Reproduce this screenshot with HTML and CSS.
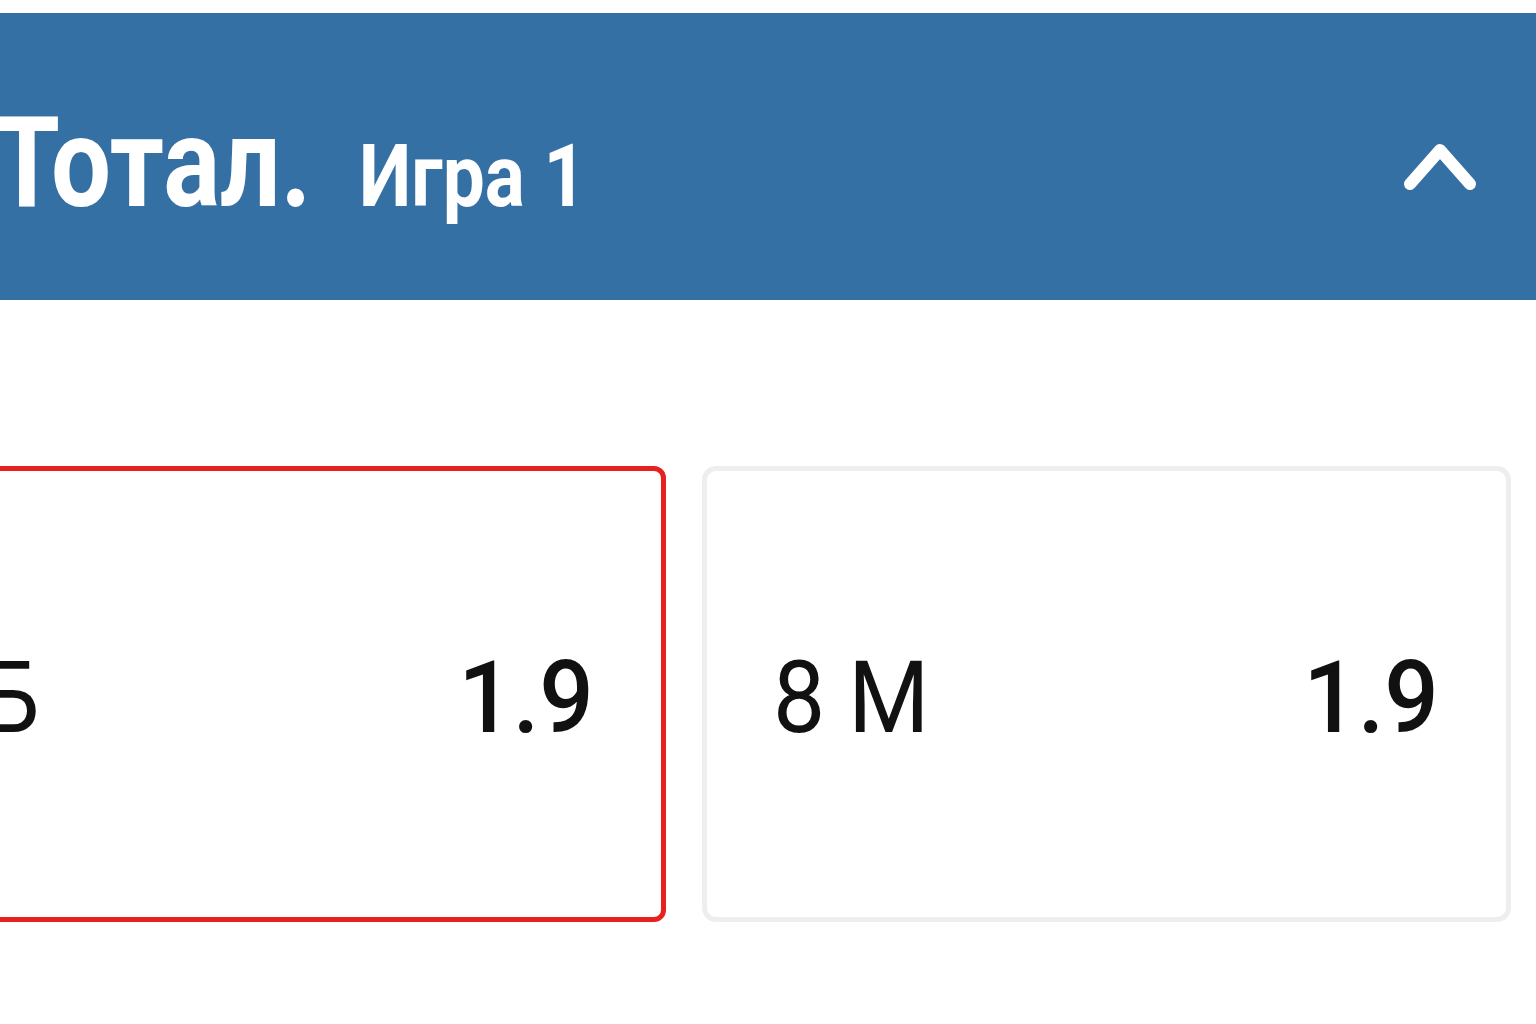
FILE: index.html
```html
<!DOCTYPE html>
<html lang="ru">
<head>
    <meta charset="UTF-8">
    <meta name="viewport" content="width=device-width, initial-scale=1.0">
    <title>Тотал. Игра 1</title>
    <link rel="stylesheet" href="styles.css">
</head>
<body>
    <div class="market">
        <div class="market-head">
            <div class="market-title">
                <span class="title-main">Тотал.</span>
                <span class="title-sub">Игра 1</span>
            </div>
            <svg class="toggle" width="76" height="56" viewBox="0 0 76 56">
                <path d="M8 47 L38 13 L68 47" fill="none" stroke="#fff" stroke-width="12" stroke-linecap="round" stroke-linejoin="round"/>
            </svg>
        </div>
        <div class="odds">
            <div class="odd selected">
                <span class="odd-label">8 Б</span>
                <span class="odd-value">1.9</span>
            </div>
            <div class="odd">
                <span class="odd-label">8 М</span>
                <span class="odd-value">1.9</span>
            </div>
        </div>
    </div>
</body>
</html>
```

FILE: styles.css
```css
html, body {
    margin: 0;
    padding: 0;
    overflow: hidden;
}
body {
    background-color: #fff;
    width: 1536px;
    height: 1024px;
    font-family: Roboto, "Noto Sans", sans-serif;
}
.market {
    padding-top: 13px;
}
.market-head {
    height: 287px;
    background-color: #3570a4;
    display: flex;
    align-items: center;
    justify-content: space-between;
    padding-right: 58px;
    box-sizing: border-box;
}
.market-title {
    display: flex;
    align-items: baseline;
    color: #fff;
    font-weight: 700;
    white-space: nowrap;
    padding-top: 12px;
}
.title-main {
    display: inline-block;
    font-size: 126px;
    transform: scaleX(0.845);
    transform-origin: left;
    margin-left: -6px;
}
.title-sub {
    display: inline-block;
    font-size: 87px;
    transform: scaleX(0.86);
    transform-origin: left;
    margin-left: -11px;
}
.toggle {
    display: block;
    margin-top: 16px;
}
.odds {
    display: flex;
    gap: 36px;
    margin-top: 166px;
    margin-left: -165px;
}
.odd {
    width: 809px;
    height: 456px;
    box-sizing: border-box;
    border: 5px solid #eeeeee;
    border-radius: 14px;
    display: flex;
    align-items: center;
    justify-content: space-between;
    padding: 6px 67px 0 66px;
    color: #111;
    font-size: 101px;
}
.odd.selected {
    width: 831px;
    border-color: #e8201f;
    border-radius: 12px;
}
.odd-label {
    display: inline-block;
    transform: scaleX(0.92);
    transform-origin: left;
}
.odd-value {
    display: inline-block;
    font-weight: 500;
    transform: scaleX(0.95);
    transform-origin: right;
}
```
